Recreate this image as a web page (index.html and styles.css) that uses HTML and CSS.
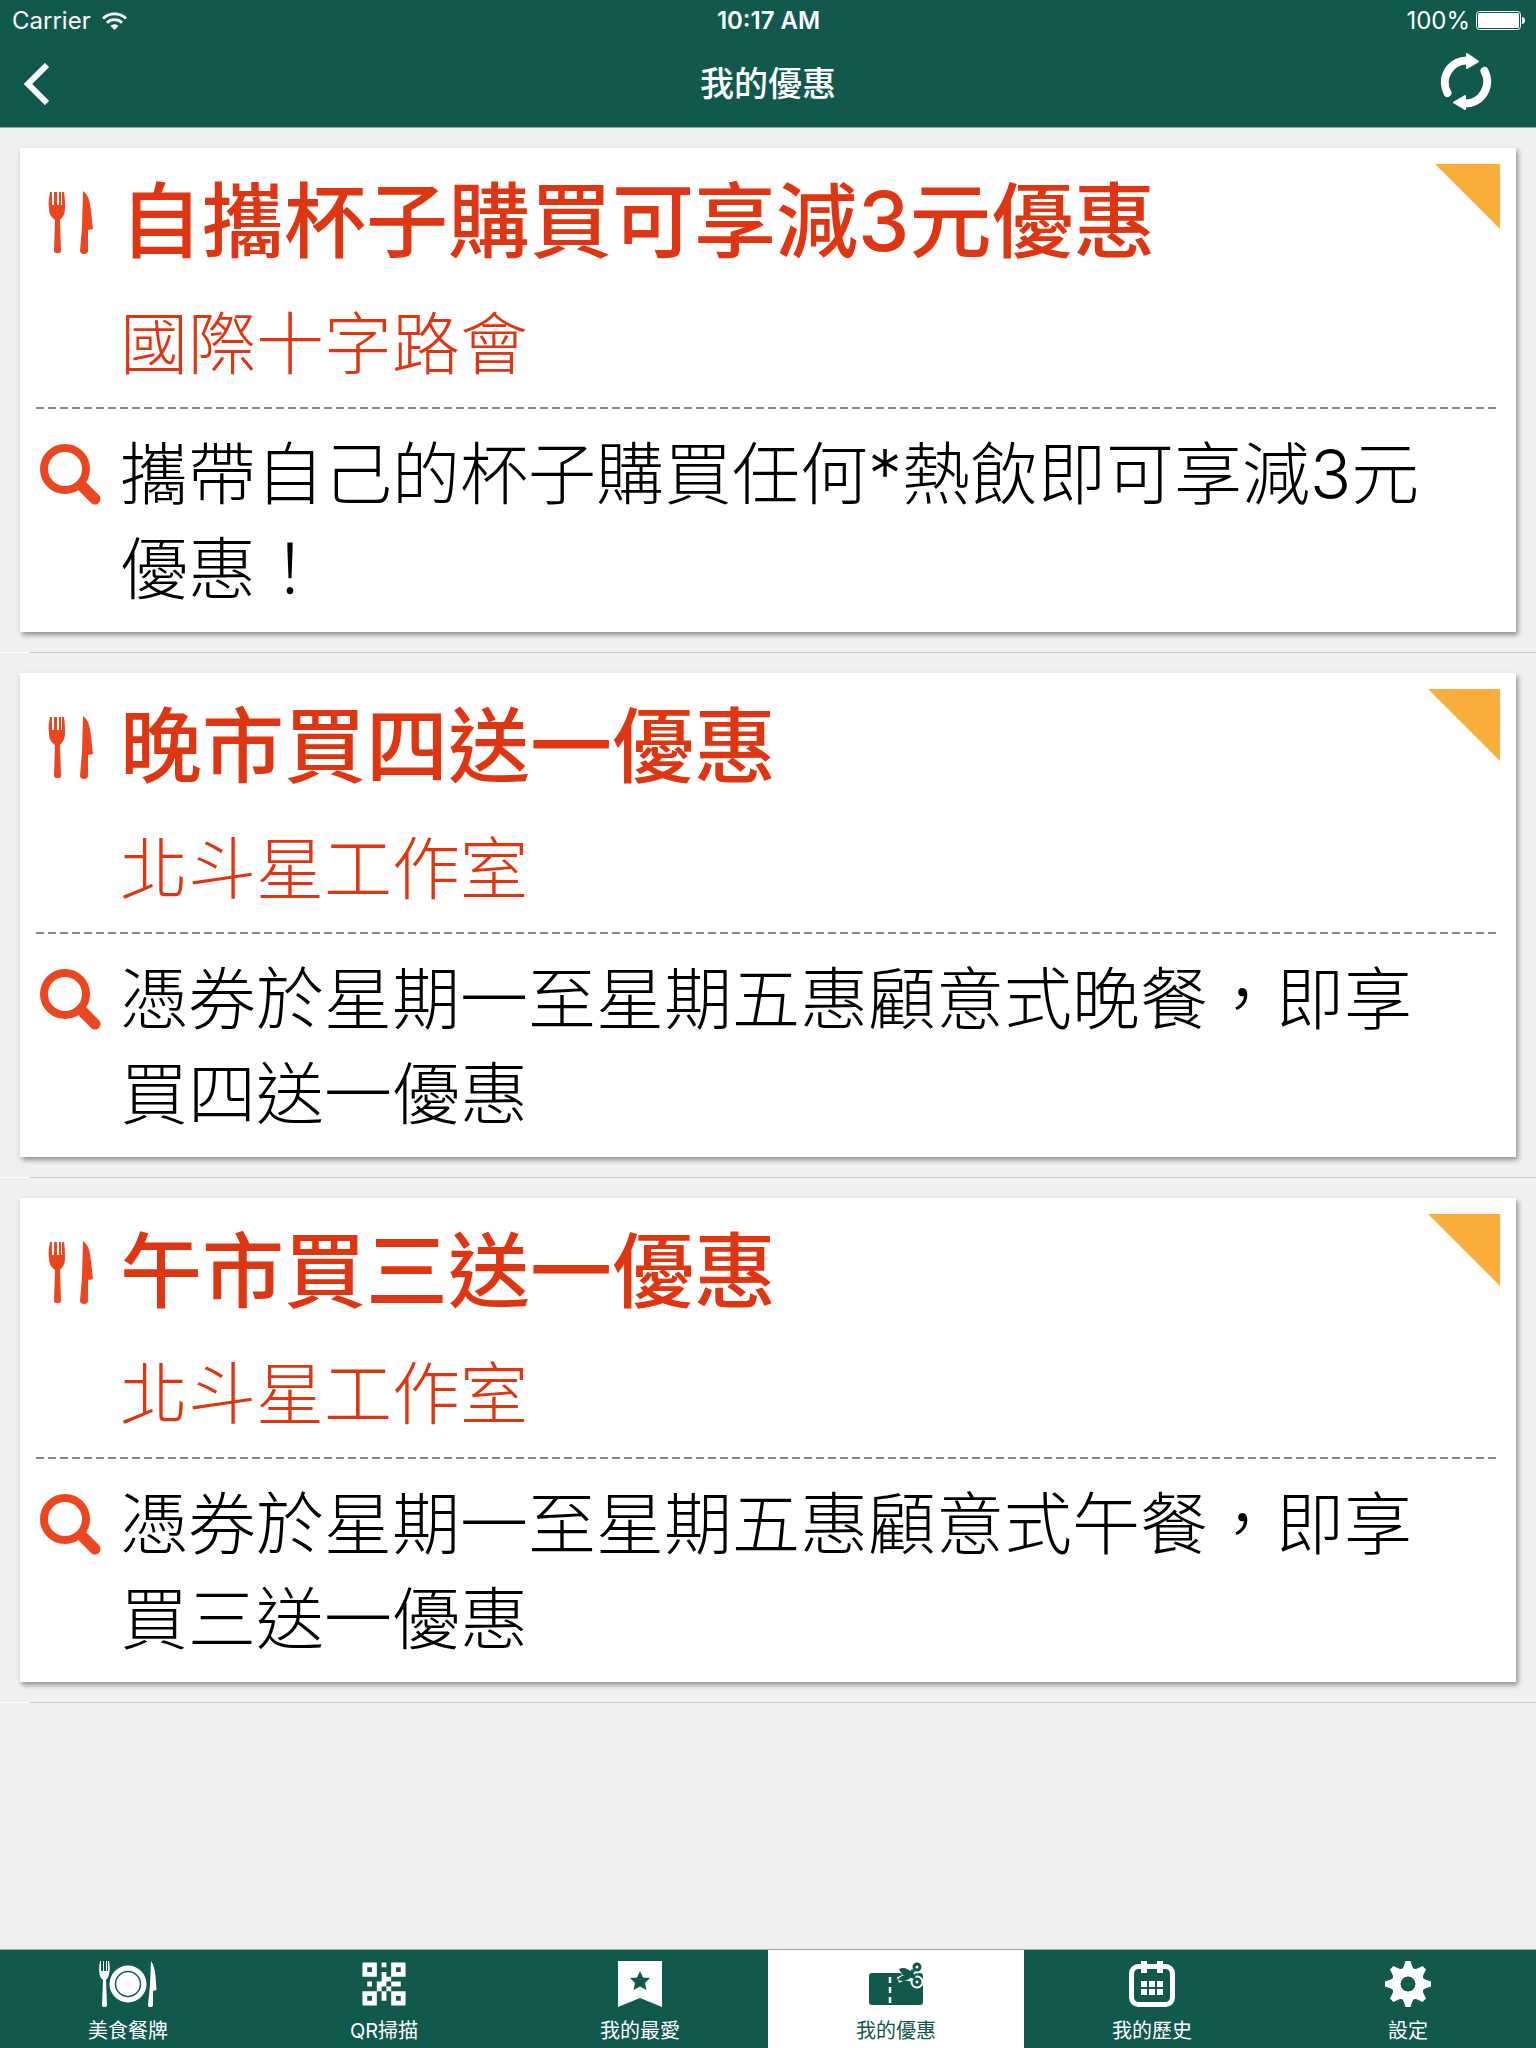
FILE: index.html
```
<!DOCTYPE html>
<html lang="zh-Hant">
  <head>
    <meta charset="utf-8" />
    <meta name="viewport" content="width=device-width, initial-scale=1" />
    <title>我的優惠</title>
    <link rel="stylesheet" href="styles.css">
  </head>
  <body>
    <!-- Shared icons -->
    <svg class="sprite" aria-hidden="true">
      <symbol id="cutlery" viewBox="0 0 46 64">
        <path d="M2 2h2v13h2V2h3v13h2V2h2v13h1V2h2c1 6 1 11 1 16 0 6-2 9-5 12l1 31c0 3-7 3-7 0l1-31c-4-3-6-6-6-12C0 13 1 7 2 2Z" />
        <path d="M35 1c6 4 7 12 8 20l2 18-5 1v21c0 4-8 4-8 0l2-24Z" />
      </symbol>
      <symbol id="search" viewBox="0 0 62 62">
        <circle cx="25" cy="26" r="21" fill="none" stroke="currentColor" stroke-width="8" />
        <path d="M43 44 55 56" stroke="currentColor" stroke-width="11" stroke-linecap="round" />
        <path d="m37 45 7-7 8 8-7 7Z" />
      </symbol>
      <symbol id="tooth" viewBox="-23 -23 46 46">
        <path d="M-2.500-23h5l2 6 4 5h-17l4-5Z" />
      </symbol>
    </svg>

    <header class="header">
      <div class="status-bar">
        <div class="status-side">
          <span>Carrier</span>
          <svg class="wifi" viewBox="0 0 25 18" aria-hidden="true">
            <path d="M1 6.500a16.500 16.500 0 0 1 23 0M5 10.700a10.700 10.700 0 0 1 15 0" fill="none" stroke="currentColor" stroke-width="2.800" />
            <path d="M8.500 14a5.600 5.600 0 0 1 8 0l-4 4Z" />
          </svg>
        </div>
        <span class="time">10:17 AM</span>
        <div class="status-side status-right">
          <span>100%</span>
          <svg class="battery" viewBox="0 0 49 19" aria-hidden="true">
            <rect x=".5" y=".5" width="44" height="18" rx="3" fill="none" stroke="currentColor" />
            <rect x="2" y="2" width="41" height="15" rx="1.500" />
            <path d="M46 6c4 0 4 7 0 7Z" />
          </svg>
        </div>
      </div>
      <div class="nav-bar">
        <button class="nav-button back" type="button" aria-label="返回">
          <svg viewBox="0 0 25 42" aria-hidden="true">
            <path d="M23 2 4 21l19 19" fill="none" stroke="currentColor" stroke-width="6" />
          </svg>
        </button>
        <h1 class="nav-title">我的優惠</h1>
        <button class="nav-button refresh" type="button" aria-label="重新整理">
          <svg viewBox="0 0 52 58" aria-hidden="true">
            <path d="M7.500 40A22 22 0 0 1 27 7.500M44.500 18A22 22 0 0 1 25 50.500" fill="none" stroke="currentColor" stroke-width="8" stroke-linecap="round" />
            <path d="M27 1 38 8.500 27 15ZM25 43v13L14 49.500Z" stroke="currentColor" stroke-width="2" stroke-linejoin="round" />
          </svg>
        </button>
      </div>
    </header>

    <main class="list">
      <article class="cell">
        <div class="card">
          <span class="corner corner-small"></span>
          <div class="row row-title">
            <svg class="cutlery" aria-hidden="true"><use href="#cutlery" /></svg>
            <h2 class="title">自攜杯子購買可享減3元優惠</h2>
          </div>
          <p class="shop">國際十字路會</p>
          <div class="row row-detail">
            <svg class="search" aria-hidden="true"><use href="#search" /></svg>
            <p class="detail">攜帶自己的杯子購買任何*熱飲即可享減3元優惠！</p>
          </div>
        </div>
      </article>

      <article class="cell">
        <div class="card">
          <span class="corner"></span>
          <div class="row row-title">
            <svg class="cutlery" aria-hidden="true"><use href="#cutlery" /></svg>
            <h2 class="title">晚市買四送一優惠</h2>
          </div>
          <p class="shop">北斗星工作室</p>
          <div class="row row-detail">
            <svg class="search" aria-hidden="true"><use href="#search" /></svg>
            <p class="detail">憑券於星期一至星期五惠顧意式晚餐，即享買四送一優惠</p>
          </div>
        </div>
      </article>

      <article class="cell">
        <div class="card">
          <span class="corner"></span>
          <div class="row row-title">
            <svg class="cutlery" aria-hidden="true"><use href="#cutlery" /></svg>
            <h2 class="title">午市買三送一優惠</h2>
          </div>
          <p class="shop">北斗星工作室</p>
          <div class="row row-detail">
            <svg class="search" aria-hidden="true"><use href="#search" /></svg>
            <p class="detail">憑券於星期一至星期五惠顧意式午餐，即享買三送一優惠</p>
          </div>
        </div>
      </article>
    </main>

    <nav class="tab-bar">
      <a class="tab" href="#menu">
        <svg viewBox="0 0 58 46" aria-hidden="true">
          <path d="M1 0h1v10h2V0h1v10h2V0h1v10h1V0h1c1 5 1 9 0 13-.500 3-1.500 4-3 6l1 25c0 3-5 3-5 0l1-25c-2-2-3-3-3.500-6-.500-4-.500-8 .5-13ZM52 0c3 4 4 10 4.500 15l1 14-3.500 1v14c0 3-5 3-5 0l2-20Z" />
          <circle cx="29" cy="23" r="18.500" />
          <circle class="cut-line" cx="29" cy="23" r="12.500" />
        </svg>
        <span>美食餐牌</span>
      </a>
      <a class="tab" href="#scan">
        <svg viewBox="-.3 -.3 9.600 9.600" aria-hidden="true">
          <path fill-rule="evenodd" d="M0 0h3v3H0ZM1 1v1h1V1ZM6 0h3v3H6ZM7 1v1h1V1ZM0 6h3v3H0ZM1 7v1h1V7ZM6 6h3v3H6ZM7 7v1h1V7ZM4 0h1v1H4ZM4 2h1v1h1v1H5v1H4v1H3V4h1ZM1 4h1v1H1ZM6 4h2v1H6ZM5 5h1v1H5ZM4 6h1v2H4Z" />
        </svg>
        <span>QR掃描</span>
      </a>
      <a class="tab" href="#favourites">
        <svg viewBox="0 0 44 46" aria-hidden="true">
          <path d="M0 0h44v46l-22-9-22 9Z" />
          <path class="cut" d="m22 10 3 6.500 7 .5-5 5 1.500 7-6.500-3.500-6.500 3.500 1.500-7-5-5 7-.5Z" />
        </svg>
        <span>我的最愛</span>
      </a>
      <a class="tab tab-active" href="#offers" aria-current="page">
        <svg viewBox="0 0 54 46" aria-hidden="true">
          <rect y="12" width="54" height="32" rx="3" />
          <path class="cut-dash" d="M21 16v26" />
          <g class="scissors-halo">
            <path d="m30 8 11 6 7-8M29 19l12-5 7 7" />
            <circle cx="48" cy="6" r="3.500" />
            <circle cx="48" cy="21" r="3.500" />
          </g>
          <path d="M30 8c4-2 8-1 11 2l6 5-2 3-5-2c-4 0-8-3-10-8Z" />
          <path d="M29 19c2-4 6-5 9-5l5-6 3 2-4 6c-3 4-8 5-13 3Z" />
          <circle class="handle" cx="48" cy="6" r="3" />
          <circle class="handle" cx="48" cy="21" r="3" />
        </svg>
        <span>我的優惠</span>
      </a>
      <a class="tab" href="#history">
        <svg viewBox="0 0 46 46" aria-hidden="true">
          <rect x="2.500" y="5.500" width="41" height="38" rx="7" fill="none" stroke="currentColor" stroke-width="5" />
          <path d="M12 0h6v12h-6ZM28 0h6v12h-6ZM12 20h6v6h-6ZM20 20h6v6h-6ZM28 20h6v6h-6ZM12 28h6v6h-6ZM20 28h6v6h-6ZM28 28h6v6h-6Z" />
        </svg>
        <span>我的歷史</span>
      </a>
      <a class="tab" href="#settings">
        <svg viewBox="-23 -23 46 46" aria-hidden="true">
          <circle r="11.500" fill="none" stroke="currentColor" stroke-width="8" />
          <g id="teeth">
            <path id="gear-tooth" d="M-2.500-23h5l2 6 4 5h-17l4-5Z" />
            <use href="#gear-tooth" transform="rotate(90)" />
            <use href="#gear-tooth" transform="rotate(180)" />
            <use href="#gear-tooth" transform="rotate(270)" />
          </g>
          <use href="#teeth" transform="rotate(45)" />
        </svg>
        <span>設定</span>
      </a>
    </nav>
  </body>
</html>
```
FILE: styles.css
```
:root {
  --green: #11594d;
  --red: #de3512;
  --icon-red: #ea4720;
  --orange: #f9ae3b;
  --bg-color: #f0f0f0;
  --font-primary: Inter, "Noto Sans CJK TC", sans-serif;
}

*,
*::before,
*::after {
  margin: 0;
  padding: 0;
  box-sizing: border-box;
}

body {
  display: flex;
  flex-direction: column;
  min-height: 100vh;
  font-family: var(--font-primary);
  background-color: var(--bg-color);
  color: #000;
}

svg {
  display: block;
  fill: currentColor;
}

.sprite {
  position: absolute;
  width: 0;
  height: 0;
}

/* Header */
.header {
  background-color: var(--green);
  border-bottom: 1px solid #a0a5a3;
  color: #fff;
}

.status-bar {
  display: flex;
  align-items: center;
  height: 41px;
  padding: 0 11px 0 12px;
  font-size: 24px;
}

.status-side {
  display: flex;
  flex: 1;
  align-items: center;
  gap: 11px;
}

.status-right {
  justify-content: flex-end;
  gap: 6px;
}

.time {
  font-weight: 600;
}

.wifi {
  width: 25px;
  height: 18px;
}

.battery {
  width: 49px;
  height: 19px;
}

.nav-bar {
  display: grid;
  grid-template-columns: 1fr auto 1fr;
  align-items: center;
  height: 86px;
  padding: 0 24px;
}

.nav-button {
  display: flex;
  border: 0;
  background: none;
  color: inherit;
}

.back svg {
  width: 25px;
  height: 42px;
}

.refresh {
  justify-self: end;
  padding: 0 20px 4px 0;
}

.refresh svg {
  width: 52px;
  height: 58px;
}

.nav-title {
  font-size: 34px;
  font-weight: 500;
  line-height: 48px;
}

/* Offers */
.list {
  flex: 1;
}

.cell {
  padding: 20px 20px 21px;
  background: linear-gradient(90deg, #fff 30px, #c8c7cc 30px) bottom / 100% 1px no-repeat;
}

.card {
  position: relative;
  padding: 24px 16px 15px;
  background-color: #fff;
  box-shadow: 2px 3px 5px rgba(0, 0, 0, 0.4);
}

.corner {
  position: absolute;
  top: 16px;
  right: 16px;
  width: 72px;
  height: 72px;
  background-color: var(--orange);
  clip-path: polygon(0 0, 100% 0, 100% 100%);
}

.corner-small {
  width: 65px;
  height: 65px;
}

.row {
  display: flex;
}

.row-title {
  align-items: center;
  gap: 26px;
  padding-left: 12px;
}

.cutlery {
  flex: none;
  width: 46px;
  height: 64px;
  color: var(--icon-red);
}

.title {
  color: var(--red);
  font-size: 82px;
  font-weight: 500;
  line-height: 100px;
}

.shop {
  padding: 25px 0 15px 84px;
  color: var(--red);
  font-size: 68px;
  font-weight: 300;
  line-height: 95px;
}

.row-detail {
  gap: 18px;
  padding: 20px 36px 0 4px;
  background: repeating-linear-gradient(90deg, #888 0 8px, transparent 8px 12px) top / 100% 2px no-repeat;
}

.search {
  flex: none;
  width: 62px;
  height: 62px;
  margin-top: 16px;
  color: var(--icon-red);
}

.detail {
  font-size: 68px;
  font-weight: 300;
  line-height: 95px;
}

/* Tab bar */
.tab-bar {
  display: grid;
  grid-template-columns: repeat(6, 1fr);
  border-top: 1px solid #a0a5a3;
}

.tab {
  --tab-bg: var(--green);
  display: flex;
  flex-direction: column;
  align-items: center;
  gap: 10px;
  height: 98px;
  padding-top: 11px;
  background-color: var(--tab-bg);
  color: #fff;
  font-size: 20px;
  line-height: 28px;
  text-decoration: none;
}

.tab svg {
  height: 46px;
}

.tab-active {
  --tab-bg: #fff;
  color: var(--green);
}

.cut {
  fill: var(--tab-bg);
}

.cut-line {
  fill: none;
  stroke: var(--tab-bg);
  stroke-width: 1.5;
}

.cut-dash {
  stroke: var(--tab-bg);
  stroke-width: 2.5;
  stroke-dasharray: 6 4;
}

.scissors-halo {
  fill: var(--tab-bg);
  stroke: var(--tab-bg);
  stroke-width: 6;
}

.handle {
  fill: var(--tab-bg);
  stroke: currentColor;
  stroke-width: 3;
}
```
